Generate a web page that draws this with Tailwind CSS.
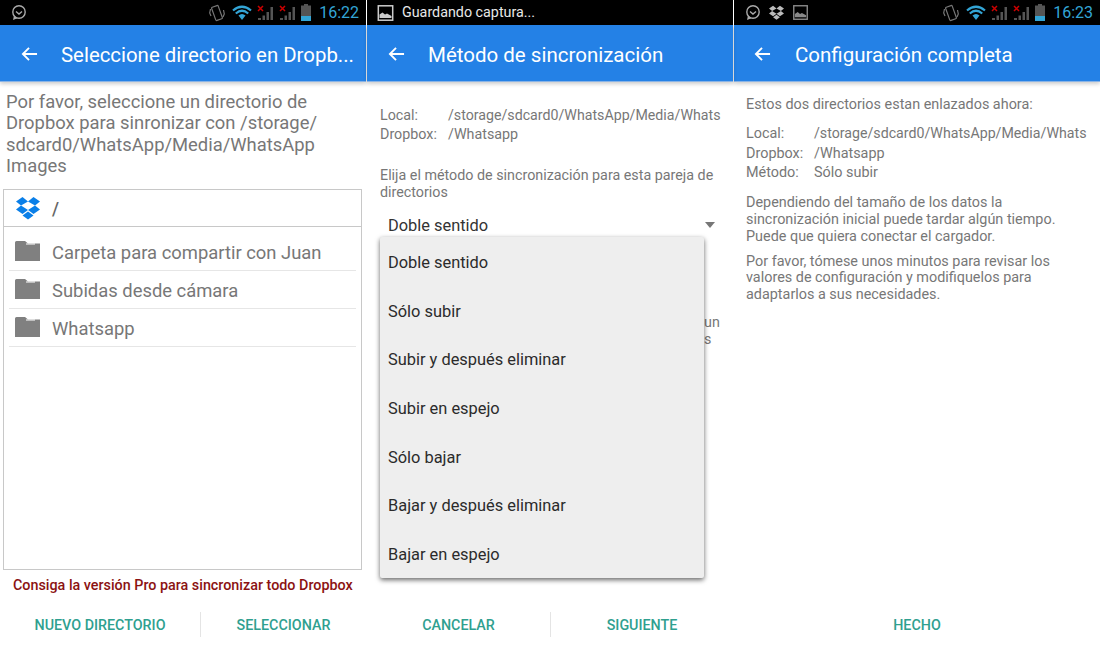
<!DOCTYPE html>
<html>
<head>
<meta charset="utf-8">
<title>Dropsync</title>
<script src="https://cdn.jsdelivr.net/npm/@tailwindcss/browser@4"></script>
</head>
<body class="bg-white overflow-hidden font-['Roboto',sans-serif]">
<svg width="0" height="0" class="absolute">
  <defs>
    <symbol id="back" viewBox="0 0 18 16"><path d="M17 8H2M8.500 1.500 2 8l6.500 6.500" fill="none" stroke="#fff" stroke-width="2"/></symbol>
    <symbol id="folder" viewBox="0 0 25 20"><path d="M0 20V1.500Q0 0 1.500 0H10l3 2.500h12V20z" fill="#808080"/><path d="M11 3h9" stroke="#fff" stroke-width="1"/></symbol>
    <symbol id="dbx" viewBox="0 0 24 24"><path d="M6.500 1 0 5.500 5 9.500 12 5.500zM17.500 1 24 5.500 19 9.500 12 5.500zM0 13.500 6.500 18 12 14 5 9.500zM24 13.500 17.500 18 12 14 19 9.500zM12 15.500 6.500 19.500 12 23.500 17.500 19.500z" fill="currentColor"/></symbol>
    <symbol id="msg" viewBox="0 0 15 15"><circle cx="8" cy="7" r="6.200" fill="none" stroke="#aaa" stroke-width="1.400"/><path d="M5 6.500l3 2.500 3-2.500" fill="none" stroke="#aaa" stroke-width="1.400"/><path d="M3 10.500 2 15l4.500-1.800z" fill="#aaa"/></symbol>
    <symbol id="pic" viewBox="0 0 16 16"><rect x=".8" y=".8" width="14.400" height="14.400" fill="none" stroke="currentColor" stroke-width="1.500"/><path d="M2 13V9.500l3-2 2.500 2 2-1 4.500 2.500v2z" fill="currentColor"/></symbol>
    <symbol id="vib" viewBox="0 0 16 18"><g fill="none" stroke="#777" stroke-width="1.200"><rect x="4.500" y="2" width="7" height="14" rx="1" transform="rotate(-20 8 9)"/><path d="M1.500 5 .7 9l1.300 3M14.500 6l.8 4-1.300 3"/></g></symbol>
    <symbol id="wifi" viewBox="0 0 20 16"><g fill="none" stroke="#33a5d6" stroke-width="2.200"><path d="M1 5.500Q10-2 19 5.500"/><path d="M3.800 8.500Q10 3 16.200 8.500"/></g><path d="M6.500 10.500Q10 7.500 13.500 10.500L10 15z" fill="#33a5d6"/></symbol>
    <symbol id="sig" viewBox="0 0 17 15"><path d="M1 13h3v2H1zM5.500 10.500h2.500V15H5.500zM9.500 7h2.500v8H9.500zM13.500 2H16v13h-2.500z" fill="#555"/><path d="M1 1l5 5M6 1 1 6" stroke="#c00" stroke-width="1.500"/></symbol>
    <symbol id="bat" viewBox="0 0 10 17"><path d="M3 0h4v1.500h3V17H0V1.500h3z" fill="#555"/><path d="M0 12h10v5H0z" fill="#33a5d6"/></symbol>
  </defs>
</svg>
<div class="flex h-[649px] w-[1100px] gap-px bg-white">

  <section class="w-[366px] flex flex-col shrink-0">
    <div class="h-[25px] bg-black flex items-center pl-[11px] pr-[7px]">
      <svg class="w-[15px] h-[15px]"><use href="#msg"/></svg>
      <div class="ml-auto flex items-center">
        <svg class="w-[16px] h-[18px]"><use href="#vib"/></svg>
        <svg class="w-[20px] h-[16px] ml-[7px]"><use href="#wifi"/></svg>
        <svg class="w-[17px] h-[15px] ml-[5px]"><use href="#sig"/></svg>
        <svg class="w-[17px] h-[15px] ml-[5px]"><use href="#sig"/></svg>
        <svg class="w-[10px] h-[17px] ml-[5px]"><use href="#bat"/></svg>
        <span class="ml-[8px] text-[16px] text-[#33a5d6] leading-none">16:22</span>
      </div>
    </div>
    <header class="h-[57px] bg-[#2481e6] border-b border-[#8ab4e6] flex items-center shadow-[0_2px_4px_rgba(0,0,0,0.2)]">
      <svg class="w-[17px] h-[16px] ml-[21px] mt-[1px]"><use href="#back"/></svg>
      <h1 class="ml-[23px] pt-[5px] text-[20.400px] text-white whitespace-nowrap">Seleccione directorio en Dropb...</h1>
    </header>
    <p class="px-[6px] pt-[9px] text-[18.400px] leading-[21.300px] text-[#777]">Por favor, seleccione un directorio de Dropbox para sinronizar con /storage/<br>sdcard0/WhatsApp/Media/WhatsApp Images</p>
    <div class="mx-[3px] mt-[13px] w-[359px] h-[381px] border border-[#c8c8c8]">
      <div class="h-[37px] border-b border-[#c8c8c8] flex items-center pl-[12px] text-[#0a7fe8]">
        <svg class="w-[24px] h-[24px]"><use href="#dbx"/></svg>
        <span class="ml-[12px] text-[18px] font-medium text-[#666]">/</span>
      </div>
      <ul class="mx-[5px] mt-[6px] text-[18.400px] text-[#777]">
        <li class="h-[38px] pt-[2px] border-b border-[#e6e6e6] flex items-center pl-[6px]"><svg class="w-[25px] h-[20px] -mt-[4px]"><use href="#folder"/></svg><span class="ml-[12px]">Carpeta para compartir con Juan</span></li>
        <li class="h-[38px] pt-[2px] border-b border-[#e6e6e6] flex items-center pl-[6px]"><svg class="w-[25px] h-[20px] -mt-[4px]"><use href="#folder"/></svg><span class="ml-[12px]">Subidas desde cámara</span></li>
        <li class="h-[38px] pt-[2px] border-b border-[#e6e6e6] flex items-center pl-[6px]"><svg class="w-[25px] h-[20px] -mt-[4px]"><use href="#folder"/></svg><span class="ml-[12px]">Whatsapp</span></li>
      </ul>
    </div>
    <p class="mt-[5px] pl-[13px] text-[14.330px] leading-[20px] font-medium text-[#8b1212] whitespace-nowrap">Consiga la versión Pro para sincronizar todo Dropbox</p>
    <div class="mt-[17px] h-[25px] flex text-[14.300px] font-medium text-[#2fa08f]">
      <div class="w-[201px] pt-[2px] border-r border-[#e4e4e4] flex items-center justify-center">NUEVO DIRECTORIO</div>
      <div class="flex-1 pt-[2px] flex items-center justify-center">SELECCIONAR</div>
    </div>
  </section>

  <section class="w-[366px] flex flex-col shrink-0 relative">
    <div class="h-[25px] bg-black flex items-center pl-[10px] text-white">
      <svg class="w-[17px] h-[16px] text-[#ccc]"><use href="#pic"/></svg>
      <span class="ml-[8px] text-[14.300px] text-[#e8e8e8]">Guardando captura...</span>
    </div>
    <header class="h-[57px] bg-[#2481e6] border-b border-[#8ab4e6] flex items-center shadow-[0_2px_4px_rgba(0,0,0,0.2)]">
      <svg class="w-[17px] h-[16px] ml-[21px] mt-[1px]"><use href="#back"/></svg>
      <h1 class="ml-[23px] pt-[5px] text-[20.500px] text-white">Método de sincronización</h1>
    </header>
    <div class="px-[13px] pt-[24px] text-[14.300px] leading-[19px] text-[#777] flex-1 overflow-hidden">
      <div class="flex whitespace-nowrap"><span class="w-[68px] shrink-0">Local:</span><span class="text-[14.200px]">/storage/sdcard0/WhatsApp/Media/Whats</span></div>
      <div class="flex"><span class="w-[68px]">Dropbox:</span><span>/Whatsapp</span></div>
      <p class="mt-[23px] leading-[17px]">Elija el método de sincronización para esta pareja de directorios</p>
      <div class="mt-[15px] h-[18px] flex items-center justify-between pl-[8px] pr-[5px] text-[16.400px] text-[#333]">
        <span>Doble sentido</span>
        <span class="w-0 h-0 border-x-[5px] border-x-transparent border-t-[6px] border-t-[#777]"></span>
      </div>
      <p class="ml-[324px] mt-[80px] leading-[17px] whitespace-nowrap">un<br>s</p>
    </div>
    <ul class="absolute left-[13px] top-[237px] w-[324px] h-[341px] pt-[2px] bg-[#eeeeee] rounded-[2px] shadow-[0_2px_5px_rgba(0,0,0,0.6)] text-[16.400px] text-[#2b2b2b]">
      <li class="h-[48.700px] pl-[8px] flex items-center">Doble sentido</li>
      <li class="h-[48.700px] pl-[8px] flex items-center">Sólo subir</li>
      <li class="h-[48.700px] pl-[8px] flex items-center">Subir y después eliminar</li>
      <li class="h-[48.700px] pl-[8px] flex items-center">Subir en espejo</li>
      <li class="h-[48.700px] pl-[8px] flex items-center">Sólo bajar</li>
      <li class="h-[48.700px] pl-[8px] flex items-center">Bajar y después eliminar</li>
      <li class="h-[48.700px] pl-[8px] flex items-center">Bajar en espejo</li>
    </ul>
    <div class="mb-[12px] h-[25px] flex text-[14.300px] font-medium text-[#2fa08f]">
      <div class="w-[184px] pt-[2px] border-r border-[#e4e4e4] flex items-center justify-center">CANCELAR</div>
      <div class="flex-1 pt-[2px] flex items-center justify-center">SIGUIENTE</div>
    </div>
  </section>

  <section class="w-[366px] flex flex-col shrink-0">
    <div class="h-[25px] bg-black flex items-center pl-[11px] pr-[7px]">
      <svg class="w-[15px] h-[15px]"><use href="#msg"/></svg>
      <svg class="w-[15px] h-[15px] ml-[9px] text-[#bbb]"><use href="#dbx"/></svg>
      <svg class="w-[15px] h-[15px] ml-[9px] text-[#888]"><use href="#pic"/></svg>
      <div class="ml-auto flex items-center">
        <svg class="w-[16px] h-[18px]"><use href="#vib"/></svg>
        <svg class="w-[20px] h-[16px] ml-[7px]"><use href="#wifi"/></svg>
        <svg class="w-[17px] h-[15px] ml-[5px]"><use href="#sig"/></svg>
        <svg class="w-[17px] h-[15px] ml-[5px]"><use href="#sig"/></svg>
        <svg class="w-[10px] h-[17px] ml-[5px]"><use href="#bat"/></svg>
        <span class="ml-[8px] text-[16px] text-[#33a5d6] leading-none">16:23</span>
      </div>
    </div>
    <header class="h-[57px] bg-[#2481e6] border-b border-[#8ab4e6] flex items-center shadow-[0_2px_4px_rgba(0,0,0,0.2)]">
      <svg class="w-[17px] h-[16px] ml-[20px] mt-[1px]"><use href="#back"/></svg>
      <h1 class="ml-[24px] pt-[5px] text-[20.500px] text-white">Configuración completa</h1>
    </header>
    <div class="px-[12px] pt-[14px] text-[14.400px] leading-[17px] text-[#777] flex-1">
      <p>Estos dos directorios estan enlazados ahora:</p>
      <div class="mt-[11px] leading-[19.500px]">
        <div class="flex whitespace-nowrap"><span class="w-[68px] shrink-0">Local:</span><span class="text-[14.200px]">/storage/sdcard0/WhatsApp/Media/Whats</span></div>
        <div class="flex"><span class="w-[68px]">Dropbox:</span><span>/Whatsapp</span></div>
        <div class="flex"><span class="w-[68px]">Método:</span><span>Sólo subir</span></div>
      </div>
      <p class="mt-[11px]">Dependiendo del tamaño de los datos la sincronización inicial puede tardar algún tiempo. Puede que quiera conectar el cargador.</p>
      <p class="mt-[9px] leading-[16.800px]">Por favor, tómese unos minutos para revisar los valores de configuración y modifiquelos para adaptarlos a sus necesidades.</p>
    </div>
    <div class="mb-[12px] h-[25px] pt-[2px] flex items-center justify-center text-[14.300px] font-medium text-[#2fa08f]">HECHO</div>
  </section>
</div>
</body>
</html>
